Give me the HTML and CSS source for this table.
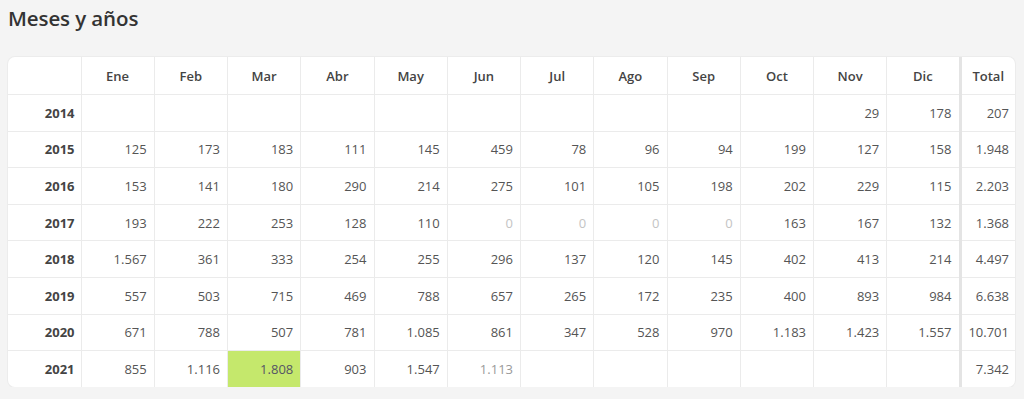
FILE: index.html
```html
<!DOCTYPE html>
<html lang="es">
<head>
<meta charset="utf-8">
<title>Meses y años</title>
<link rel="stylesheet" href="styles.css">
</head>
<body>
<h2 class="title">Meses y años</h2>
<div class="card">
<table class="grid">
<colgroup>
<col class="c-year"><col class="c-m"><col class="c-m"><col class="c-m"><col class="c-m"><col class="c-m"><col class="c-m"><col class="c-m"><col class="c-m"><col class="c-m"><col class="c-m"><col class="c-m"><col class="c-m"><col class="c-total">
</colgroup>
<thead>
<tr><th></th><th>Ene</th><th>Feb</th><th>Mar</th><th>Abr</th><th>May</th><th>Jun</th><th>Jul</th><th>Ago</th><th>Sep</th><th>Oct</th><th>Nov</th><th>Dic</th><th class="total">Total</th></tr>
</thead>
<tbody>
<tr><th>2014</th><td></td><td></td><td></td><td></td><td></td><td></td><td></td><td></td><td></td><td></td><td>29</td><td>178</td><td class="total">207</td></tr>
<tr><th>2015</th><td>125</td><td>173</td><td>183</td><td>111</td><td>145</td><td>459</td><td>78</td><td>96</td><td>94</td><td>199</td><td>127</td><td>158</td><td class="total">1.948</td></tr>
<tr><th>2016</th><td>153</td><td>141</td><td>180</td><td>290</td><td>214</td><td>275</td><td>101</td><td>105</td><td>198</td><td>202</td><td>229</td><td>115</td><td class="total">2.203</td></tr>
<tr><th>2017</th><td>193</td><td>222</td><td>253</td><td>128</td><td>110</td><td class="zero">0</td><td class="zero">0</td><td class="zero">0</td><td class="zero">0</td><td>163</td><td>167</td><td>132</td><td class="total">1.368</td></tr>
<tr><th>2018</th><td>1.567</td><td>361</td><td>333</td><td>254</td><td>255</td><td>296</td><td>137</td><td>120</td><td>145</td><td>402</td><td>413</td><td>214</td><td class="total">4.497</td></tr>
<tr><th>2019</th><td>557</td><td>503</td><td>715</td><td>469</td><td>788</td><td>657</td><td>265</td><td>172</td><td>235</td><td>400</td><td>893</td><td>984</td><td class="total">6.638</td></tr>
<tr><th>2020</th><td>671</td><td>788</td><td>507</td><td>781</td><td>1.085</td><td>861</td><td>347</td><td>528</td><td>970</td><td>1.183</td><td>1.423</td><td>1.557</td><td class="total">10.701</td></tr>
<tr><th>2021</th><td>855</td><td>1.116</td><td class="best">1.808</td><td>903</td><td>1.547</td><td class="partial">1.113</td><td></td><td></td><td></td><td></td><td></td><td></td><td class="total">7.342</td></tr>
</tbody>
</table>
</div>
</body>
</html>
```

FILE: styles.css
```css
html, body {
  margin: 0;
  background: #f4f4f4;
}
body {
  padding: 0 9px 0 8px;
  font-family: "Open Sans", "Noto Sans", "Liberation Sans", sans-serif;
  color: #555;
}
.title {
  margin: 0;
  padding-top: 4px;
  height: 57px;
  box-sizing: border-box;
  font-size: 20.5px;
  line-height: 28px;
  font-weight: 600;
  color: #333;
  letter-spacing: -0.1px;
}
.card {
  background: #fff;
  border-radius: 7px;
  box-shadow: 0 0 0 1px #ececec;
  overflow: hidden;
}
.grid {
  width: 100%;
  border-collapse: collapse;
  table-layout: fixed;
  font-size: 13px;
}
.c-year { width: 73px; }
.c-total { width: 55px; }
.grid th, .grid td {
  border: 1px solid #ebebeb;
  height: 35.6px;
  padding: 0 7px 0 0;
  text-align: right;
  white-space: nowrap;
}
.grid thead th {
  height: 37px;
  text-align: center;
  padding: 0;
  font-weight: 600;
  color: #444;
  border-top: 0;
}
.grid tbody th {
  font-weight: 700;
  color: #444;
  padding-right: 6px;
}
.grid tbody tr:last-child > * { border-bottom: 0; }
.grid tr > *:first-child { border-left: 0; }
.grid tr > *:last-child { border-right: 0; }
.grid .total {
  border-left: 3px solid #e4e4e4;
  padding-right: 6px;
}
.grid thead .total {
  text-align: center;
  padding: 0;
}
.zero { color: #c4c4c4; }
.partial { color: #9a9a9a; }
.best {
  background: #c5e86c;
  color: #556;
}
```
